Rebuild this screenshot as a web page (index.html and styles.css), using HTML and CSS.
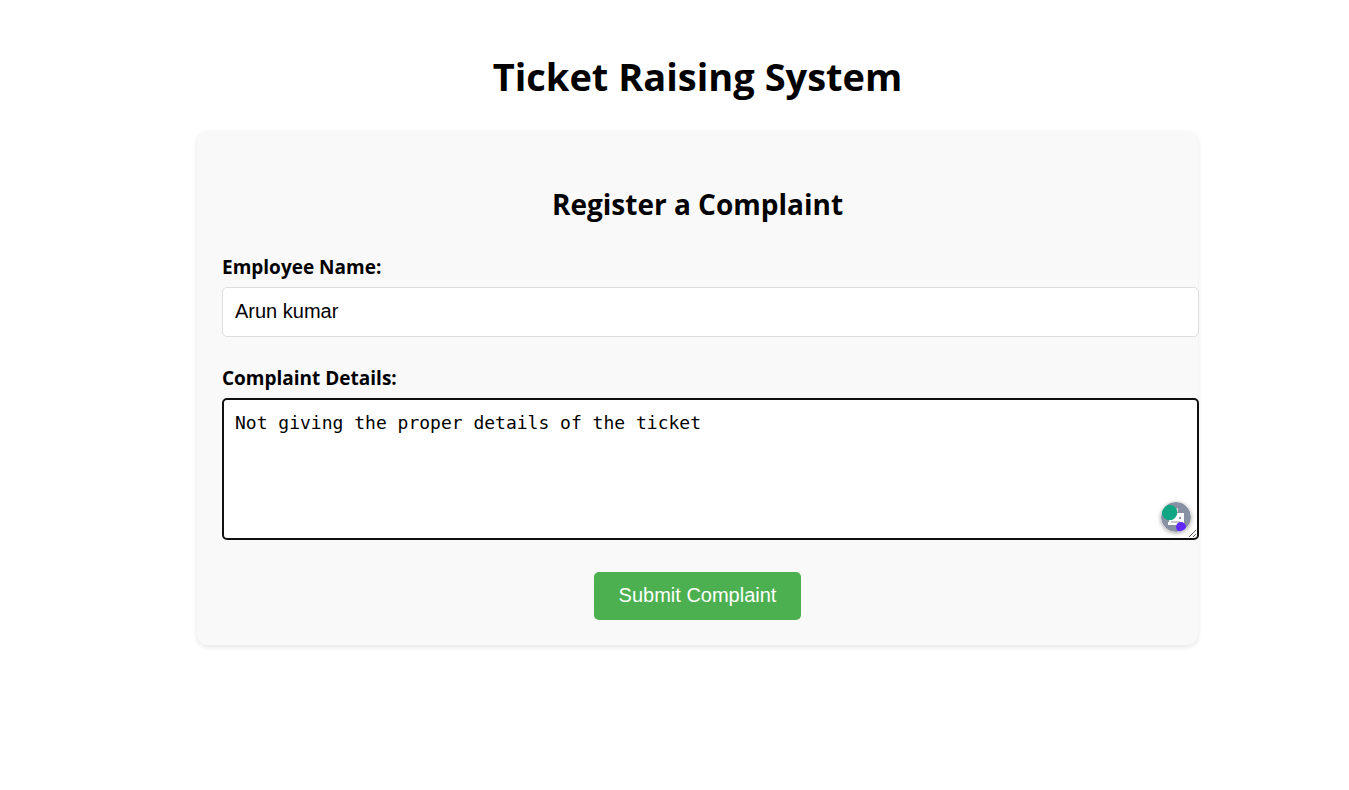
FILE: index.html
```html
<!DOCTYPE html>
<html lang="en">
<head>
<meta charset="utf-8">
<title>Ticket Raising System</title>
<link rel="stylesheet" href="styles.css">
</head>
<body>
<main class="page">
  <h1 class="page-title">Ticket Raising System</h1>
  <form class="card">
    <h2 class="card-title">Register a Complaint</h2>
    <div class="field">
      <label class="label" for="employee">Employee Name:</label>
      <input class="control" id="employee" type="text" value="Arun kumar">
    </div>
    <div class="field">
      <label class="label" for="details">Complaint Details:</label>
      <div class="editor">
        <textarea class="control details" id="details" spellcheck="false">Not giving the proper details of the ticket</textarea>
        <svg class="assistant" viewBox="0 0 30 30" aria-hidden="true">
          <circle cx="15" cy="15" r="15" fill="#8791a3"/>
          <path d="M15 7l2-1v4h-2z" fill="#dfe3e8"/>
          <path d="M8 11h15v10h-3v2H7v-3h1z" fill="#fff"/>
          <circle cx="19" cy="16" r="1" fill="#667085"/>
          <path d="M10 20h9" stroke="#8791a3"/>
          <circle cx="8.500" cy="10.500" r="7.800" fill="#11a683"/>
          <circle cx="20" cy="25" r="5" fill="#6229ff"/>
        </svg>
      </div>
    </div>
    <button class="submit" type="button">Submit Complaint</button>
  </form>
</main>
</body>
</html>
```
FILE: styles.css
```css
body {
  margin: 0;
  background: #fff;
  color: #000;
  font-family: "Open Sans", "Noto Sans", sans-serif;
}

.page {
  padding: 49px 0 50px 46px;
}

.page-title {
  margin: 0 0 28px;
  font-size: 38px;
  line-height: 54px;
  text-align: center;
}

.card {
  box-sizing: border-box;
  max-width: 1001px;
  margin: 0 auto;
  padding: 25px;
  border-radius: 10px;
  background: #f9f9f9;
  box-shadow: 0 2px 5px rgba(0, 0, 0, 0.1);
}

.card-title {
  margin: 28px 0 30px;
  font-size: 28px;
  line-height: 40px;
  text-align: center;
}

.field {
  margin-bottom: 28px;
}

.label {
  display: block;
  margin-bottom: 6px;
  font-size: 19px;
  line-height: 27px;
  font-weight: bold;
}

/* Controls run past the content box by their own padding and border. */
.control {
  display: block;
  width: 100%;
  height: 24px;
  margin: 0;
  padding: 11px 12px 13px;
  border: 1px solid #ddd;
  border-radius: 5px;
  background: #fff;
  color: #000;
  font: 20px/24px "Liberation Sans", Arial, sans-serif;
}

.editor {
  position: relative;
}

.details {
  height: 116px;
  padding: 11px;
  border: 2px solid #101010;
  outline: none;
  font: 18px/24px "DejaVu Sans Mono", monospace;
  resize: both;
}

.assistant {
  position: absolute;
  right: -18px;
  bottom: 8px;
  width: 30px;
  height: 30px;
  border-radius: 50%;
  box-shadow: 0 1px 4px rgba(0, 0, 0, 0.4);
}

.submit {
  display: block;
  margin: 32px auto 0;
  padding: 11px 25px 13px;
  border: 0;
  border-radius: 5px;
  background: #4caf50;
  color: #fff;
  font: 20px/24px "Liberation Sans", Arial, sans-serif;
}
```
